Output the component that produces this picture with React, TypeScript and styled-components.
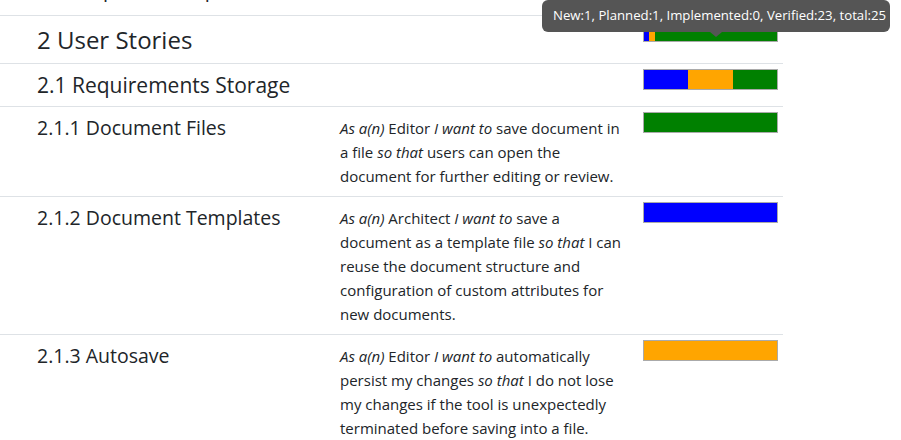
import styled, { createGlobalStyle } from 'styled-components';

const GlobalStyle = createGlobalStyle`
  body {
    margin: 0;
    background: #ffffff;
    color: #212529;
    font-family: "Open Sans", "Noto Sans", "Liberation Sans", sans-serif;
    font-size: 15px;
    line-height: 1.5;
  }
`;

const Page = styled.div`
  position: relative;
  width: 901px;
  height: 440px;
  overflow: hidden;
`;

const Table = styled.div`
  width: 783px;
`;

const Row = styled.div`
  display: grid;
  grid-template-columns: 332px 303px 1fr;
  border-bottom: 1px solid #dee2e6;
`;

const PrevRow = styled.div`
  height: 16px;
  overflow: hidden;
  border-bottom: 1px solid #dee2e6;
  box-sizing: border-box;
`;

const PrevText = styled.div`
  margin-top: -22px;
  padding-left: 37px;
  font-size: 20px;
  line-height: 24px;
`;

const headingSize: Record<number, string> = { 1: '24px', 2: '21px', 3: '19.5px' };
const headingLine: Record<number, string> = { 1: '29px', 2: '24px', 3: '24px' };

const Heading = styled.div<{ $level: number }>`
  padding: 9px 8px 9px 37px;
  font-size: ${(p) => headingSize[p.$level]};
  line-height: ${(p) => headingLine[p.$level]};
  font-weight: 400;
`;

const Story = styled.div`
  padding: 9px 8px 8px;
  font-size: 15px;
  line-height: 24px;
`;

const BarCell = styled.div`
  padding: 5px 8px;
`;

const Bar = styled.div`
  display: flex;
  width: 135px;
  height: 21px;
  box-sizing: border-box;
  border: 1px solid #aaaaaa;
`;

const Segment = styled.div<{ $color: string }>`
  background: ${(p) => p.$color};
`;

const Tooltip = styled.div`
  position: absolute;
  left: 542px;
  top: 0;
  width: 348px;
  height: 32px;
  box-sizing: border-box;
  padding: 0 11px;
  display: flex;
  align-items: center;
  background: #555555;
  color: #ffffff;
  border-radius: 6px;
  font-size: 13.2px;
  line-height: 1;
  white-space: nowrap;

  &::after {
    content: '';
    position: absolute;
    left: 168px;
    top: 32px;
    border-left: 6px solid transparent;
    border-right: 6px solid transparent;
    border-top: 5px solid #555555;
  }
`;

type Counts = { new: number; planned: number; implemented: number; verified: number };

const colors = { new: '#0000ff', planned: '#ffa500', implemented: '#ffff00', verified: '#008000' };

function StatusBar({ counts }: { counts: Counts }) {
  const total = counts.new + counts.planned + counts.implemented + counts.verified;
  const keys = ['new', 'planned', 'implemented', 'verified'] as const;
  return (
    <Bar>
      {keys.map((k) =>
        counts[k] > 0 ? (
          <Segment key={k} $color={colors[k]} style={{ width: `${(counts[k] / total) * 100}%` }} />
        ) : null
      )}
    </Bar>
  );
}

type Item = {
  title: string;
  level: number;
  counts: Counts;
  story?: { role: string; want: string; so: string };
};

const items: Item[] = [
  { title: '2 User Stories', level: 1, counts: { new: 1, planned: 1, implemented: 0, verified: 23 } },
  { title: '2.1 Requirements Storage', level: 2, counts: { new: 1, planned: 1, implemented: 0, verified: 1 } },
  {
    title: '2.1.1 Document Files',
    level: 3,
    counts: { new: 0, planned: 0, implemented: 0, verified: 1 },
    story: {
      role: 'Editor',
      want: 'save document in a file',
      so: 'users can open the document for further editing or review.',
    },
  },
  {
    title: '2.1.2 Document Templates',
    level: 3,
    counts: { new: 1, planned: 0, implemented: 0, verified: 0 },
    story: {
      role: 'Architect',
      want: 'save a document as a template file',
      so: 'I can reuse the document structure and configuration of custom attributes for new documents.',
    },
  },
  {
    title: '2.1.3 Autosave',
    level: 3,
    counts: { new: 0, planned: 1, implemented: 0, verified: 0 },
    story: {
      role: 'Editor',
      want: 'automatically persist my changes',
      so: 'I do not lose my changes if the tool is unexpectedly terminated before saving into a file.',
    },
  },
];

export default function App() {
  return (
    <Page>
      <GlobalStyle />
      <Table>
        <PrevRow>
          <PrevText>1.2 Scope and Purpose</PrevText>
        </PrevRow>
        {items.map((item) => (
          <Row key={item.title}>
            <Heading $level={item.level}>{item.title}</Heading>
            <Story>
              {item.story && (
                <>
                  <i>As a(n)</i> {item.story.role} <i>I want to</i> {item.story.want} <i>so that</i>{' '}
                  {item.story.so}
                </>
              )}
            </Story>
            <BarCell>
              <StatusBar counts={item.counts} />
            </BarCell>
          </Row>
        ))}
      </Table>
      <Tooltip>New:1, Planned:1, Implemented:0, Verified:23, total:25</Tooltip>
    </Page>
  );
}
